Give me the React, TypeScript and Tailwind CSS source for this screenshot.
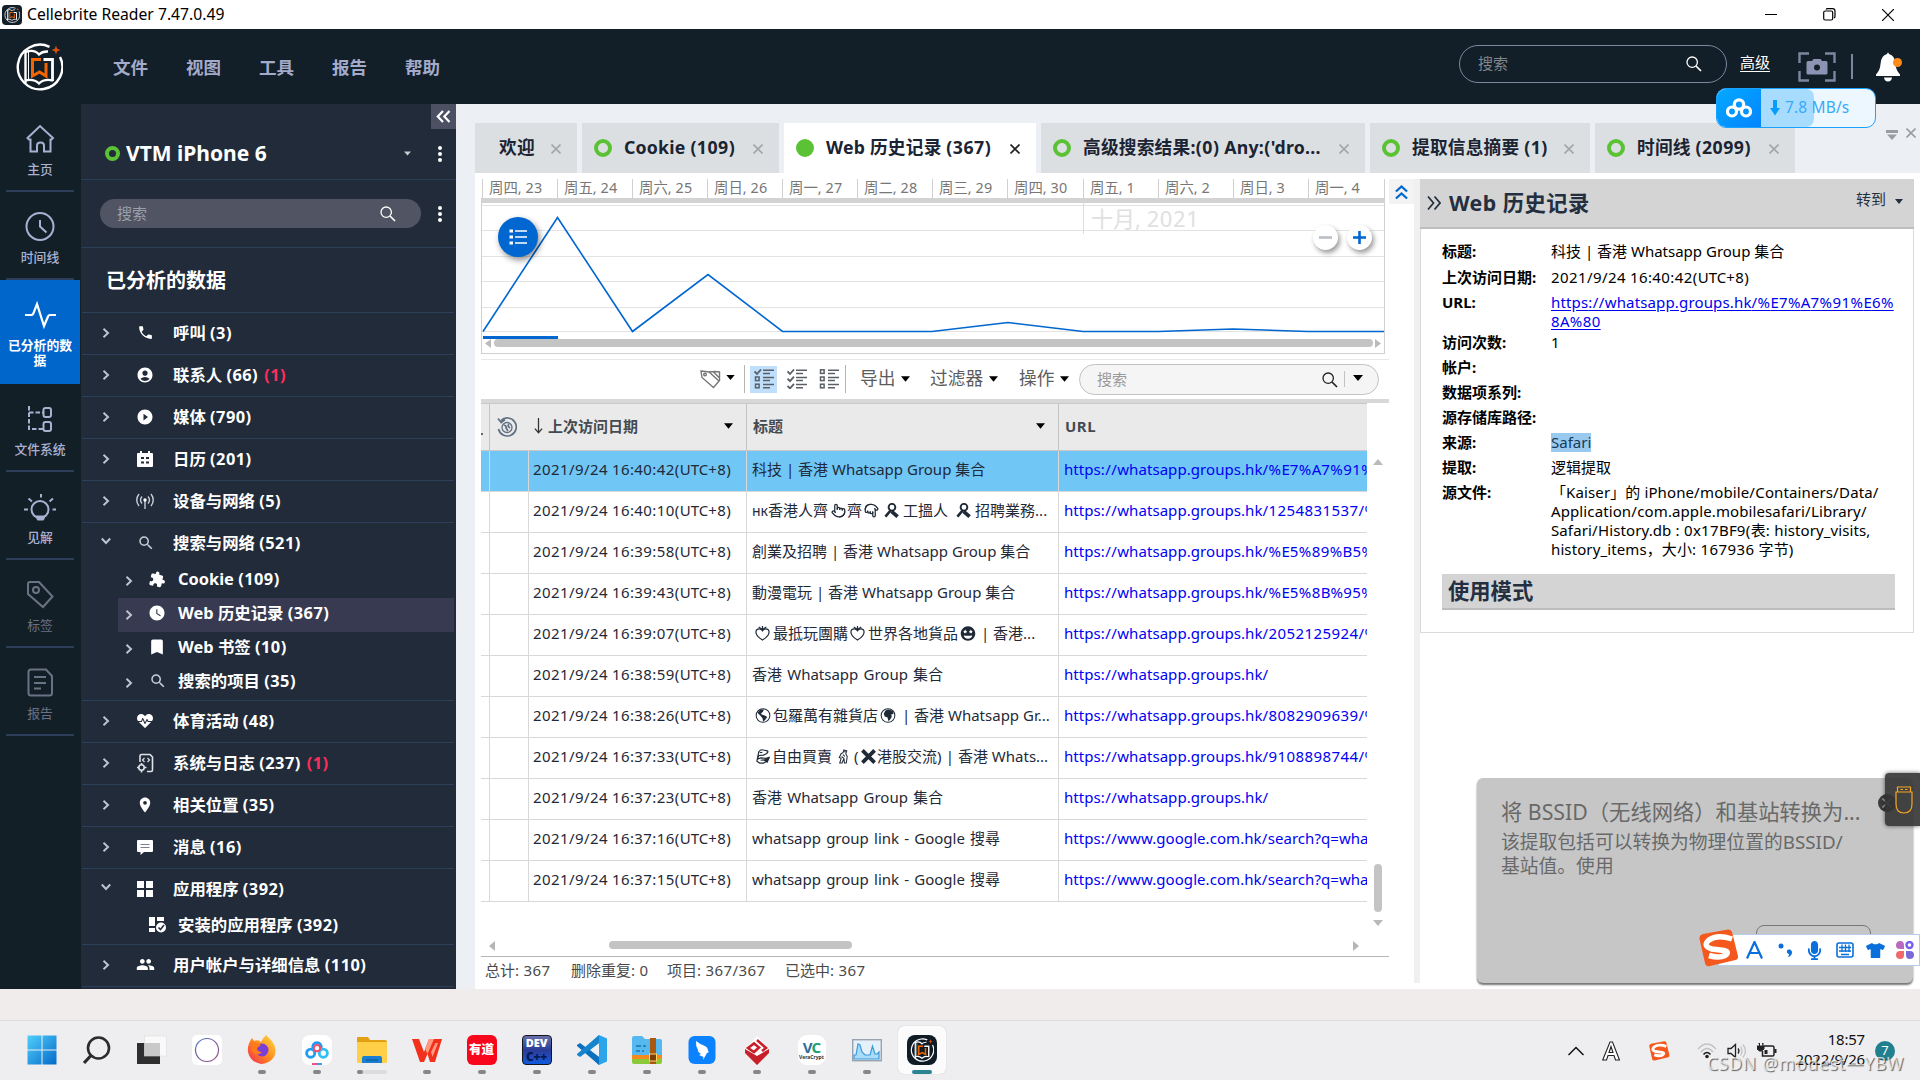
import type { ReactNode } from "react"
import clsx from "clsx"
import { Pointer } from "lucide-react"
import {
  MdPhone,
  MdAccountCircle,
  MdPlayCircleFilled,
  MdSearch,
  MdExtension,
  MdWatchLater,
  MdBookmark,
  MdLocationOn,
  MdPeople,
} from "react-icons/md"
import { FaHeartbeat, FaGrinStars, FaTshirt, FaMicrophone } from "react-icons/fa"

/* ---------- shared bits ---------- */

// Digits and symbols are set a touch wider than the letters around them
function T({ children }: { children: string }) {
  return (
    <>
      {children.split(/([0-9:%()+/]+)/).map((part, i) =>
        i % 2 ? (
          <span key={i} className="tracking-[0.028em] whitespace-pre">
            {part}
          </span>
        ) : (
          <span key={i} className="whitespace-pre">
            {part}
          </span>
        )
      )}
    </>
  )
}

function Caret({ className = "h-[6px] w-[10px]" }: { className?: string }) {
  return (
    <svg viewBox="0 0 10 6" className={clsx("shrink-0", className)}>
      <path d="M0 0H10L5 6Z" fill="currentColor" />
    </svg>
  )
}

function Cross({ className }: { className?: string }) {
  return (
    <svg viewBox="0 0 10 10" className={clsx("h-[10px] w-[10px] shrink-0", className)}>
      <path d="M.5 .5L9.5 9.5M9.5 .5L.5 9.5" stroke="currentColor" strokeWidth="1.6" fill="none" />
    </svg>
  )
}

function Lens({ className }: { className?: string }) {
  return (
    <svg viewBox="0 0 16 16" className={clsx("h-4 w-4 shrink-0", className)} fill="none" stroke="currentColor">
      <circle cx="6.2" cy="6.2" r="5.2" strokeWidth="1.3" />
      <path d="M10 10L15 15" strokeWidth="1.7" />
    </svg>
  )
}

function Ring({ className }: { className?: string }) {
  return <span className={clsx("block shrink-0 rounded-full border-[#5bc236]", className)} />
}

function Dots() {
  return (
    <div className="flex w-1 flex-col gap-[2px]">
      <i className="h-1 w-1 rounded-full bg-white" />
      <i className="h-1 w-1 rounded-full bg-white" />
      <i className="h-1 w-1 rounded-full bg-white" />
    </div>
  )
}

function Logo({ className }: { className?: string }) {
  return (
    <svg viewBox="0 0 48 48" className={className} fill="none">
      <path d="M34.5 3.8A22.3 22.3 0 1 0 45 14" stroke="#fff" strokeWidth="2.4" />
      <path d="M10.5 40V9C16 7 21 8 24 11.5C26.5 9 29 8.3 33 8.5" stroke="#fff" strokeWidth="2.4" />
      <path d="M13.5 9V38" stroke="#fff" strokeWidth="1" />
      <path d="M28.500 16.500H37.500V38" stroke="#fff" strokeWidth="2.8" />
      <path d="M10 37.500C16 36 21 37.500 24 40.500C27 37.500 32 36 38 37.500" stroke="#fff" strokeWidth="2.4" />
      <path d="M26 16.500H17.500V33L24.500 29L31 33V20" stroke="#f26500" strokeWidth="3" />
      <path d="M41 2.500L42.200 5.800L45.500 7L42.200 8.200L41 11.500L39.800 8.200L36.500 7L39.800 5.800Z" fill="#d9500c" />
    </svg>
  )
}

/* ---------- title bar and header ---------- */

function TitleBar() {
  return (
    <div className="flex h-[29px] shrink-0 items-center bg-white text-black">
      <div className="ml-[2px] flex h-5 w-5 items-center justify-center rounded bg-[#13202a]">
        <Logo className="h-4 w-4" />
      </div>
      <span className="ml-[5px] text-[15.7px]">Cellebrite Reader 7.47.0.49</span>
      <svg viewBox="0 0 12 12" className="ml-auto h-3 w-3" stroke="#000">
        <path d="M0 5.500H12" />
      </svg>
      <svg viewBox="0 0 13 13" className="ml-[46px] h-[13px] w-[13px]" fill="none" stroke="#000" strokeWidth="1.2">
        <rect x=".7" y="3" width="9" height="9" rx="1.5" />
        <path d="M3 1.500Q3.500 .7 4.500 .7H9.500Q12 .7 12 3V8.500Q12 9.500 11 10" />
      </svg>
      <svg viewBox="0 0 12 12" className="mr-[26px] ml-[46px] h-3 w-3" stroke="#000" strokeWidth="1.2">
        <path d="M0 0L12 12M12 0L0 12" />
      </svg>
    </div>
  )
}

function Header() {
  const menus = ["文件", "视图", "工具", "报告", "帮助"]
  return (
    <header className="flex h-[75px] shrink-0 items-center bg-[#131f28]">
      <Logo className="mt-px ml-[15px] h-12 w-12" />
      <nav className="mt-[2px] ml-[50px] flex gap-[38px] text-[17.5px] leading-none font-bold text-[#a3aaca]">
        {menus.map((m) => (
          <span key={m} className="w-[35px] whitespace-nowrap">
            {m}
          </span>
        ))}
      </nav>
      <div className="mt-[-5px] ml-auto flex h-[38px] w-[268px] items-center justify-between rounded-full border border-[#7c87a0] pr-6 pb-px pl-[18px] text-[15px] text-[#80868c]">
        搜索
        <Lens className="text-white" />
      </div>
      <span className="mt-[-7px] ml-[13px] border-b border-white text-[15px] leading-[17px] text-white">高级</span>
      <svg viewBox="0 0 38 30" className="mt-px ml-7 h-[30px] w-[38px]" fill="none">
        <path d="M1.500 11V1.500H11M27 1.500H36.500V11M36.500 19V28.500H27M11 28.500H1.500V19" stroke="#7d86a0" strokeWidth="2.4" />
        <path d="M10 9H14L15.500 7H22.500L24 9H28Q29.500 9 29.500 10.500V21Q29.500 22.500 28 22.500H10Q8.500 22.500 8.500 21V10.500Q8.500 9 10 9Z" fill="#8d93b3" />
        <circle cx="19" cy="15.500" r="3" fill="#131f28" />
      </svg>
      <i className="ml-[15px] h-[25px] w-[2px] bg-[#7d86a0]" />
      <svg viewBox="0 0 26 30" className="mr-[18px] ml-[23px] h-[30px] w-[26px]">
        <path d="M11 2Q12 -1 13 2Q19 3.500 19.500 12Q19.800 18 24 22.500V24H0V22.500Q4.200 18 4.500 12Q5 3.500 11 2ZM8 25.500H16Q15.500 29.500 12 29.500Q8.500 29.500 8 25.500Z" fill="#fff" />
        <circle cx="21.5" cy="10.5" r="4.5" fill="#ff8c1a" />
      </svg>
    </header>
  )
}

/* ---------- left rail ---------- */

function RailItem({ label, dim, active, children }: { label: string; dim?: boolean; active?: boolean; children: ReactNode }) {
  return (
    <div
      className={clsx(
        "flex w-20 shrink-0 flex-col items-center text-[12.8px] leading-[15px]",
        active ? "h-[104px] bg-[#0066cc] pt-5 font-bold text-white" : "h-[88px] pt-5",
        !active && (dim ? "text-[#6c7285]" : "text-[#a9b1d2]")
      )}
    >
      <svg viewBox="0 0 32 30" className="h-[30px] w-8 shrink-0" fill="none" stroke="currentColor" strokeWidth="2">
        {children}
      </svg>
      <span className={clsx("px-2 text-center", active ? "mt-2 w-20" : "mt-2 whitespace-nowrap", !dim && !active && "font-medium")}>
        {label}
      </span>
      {!active && <i className="mt-auto h-[2px] w-[68px] bg-[#2d3d5a]" />}
    </div>
  )
}

function Rail() {
  return (
    <aside className="flex w-[81px] shrink-0 flex-col bg-[#131f27]">
      <RailItem label="主页">
        <path d="M3.500 14L16 2L29 14L27.500 15.500H26.500V27.500H20V21.500Q20 18.500 16.500 18.500Q13 18.500 13 21.500V27.500H6.500V15.500H5Z" />
      </RailItem>
      <RailItem label="时间线">
        <circle cx="16" cy="14.500" r="13.500" />
        <path d="M16 8V14.500L22.500 20.500" />
      </RailItem>
      <RailItem label="已分析的数据" active>
        <path d="M1 15H7Q9 15 9.500 13L13 4L20 26L24 16.500Q24.500 15 26 15H32" strokeWidth="2.2" />
      </RailItem>
      <RailItem label="文件系统">
        <path d="M5 2V25H20M5 8.500H19" strokeDasharray="4.500 2" />
        <rect x="19.500" y="4" width="7.500" height="9" rx="2" />
        <rect x="19.500" y="18" width="7.500" height="9" rx="2" />
      </RailItem>
      <RailItem label="见解">
        <circle cx="16" cy="17.500" r="8.500" />
        <path d="M12 24H21L19.500 28H13.500Z" fill="currentColor" strokeWidth="1" />
        <path d="M17 2V5.500M4.500 6.500L8 9.500M29 6.500L25.500 9.500M0 17.500H4M28.500 17.500H32" />
      </RailItem>
      <RailItem label="标签" dim>
        <path d="M4 4Q4 2 6 2L15 2L28.500 16.500L19 27L4 14Z" />
        <circle cx="12" cy="10" r="3" />
      </RailItem>
      <RailItem label="报告" dim>
        <path d="M7 1.500H22L28 8V25Q28 27.500 25.500 27.500H7Q4.500 27.500 4.500 25V4Q4.500 1.500 7 1.500Z" />
        <path d="M10 9H22M10 15H22M10 20.500H17" />
      </RailItem>
    </aside>
  )
}

/* ---------- device tree ---------- */

function CalendarIcon() {
  return (
    <svg viewBox="0 0 16 16" className="h-4 w-4" fill="currentColor">
      <path fillRule="evenodd" d="M1 2H3V0H5V2H11V0H13V2H15Q16 2 16 3V15Q16 16 15 16H1Q0 16 0 15V3Q0 2 1 2ZM4 6V8H7V6ZM9 6V8H12V6ZM4 10.500V12.500H7V10.500ZM9 10.500V12.500H12V10.500Z" />
    </svg>
  )
}

function AntennaIcon() {
  return (
    <svg viewBox="0 0 18 16" className="h-4 w-[18px]" fill="none" stroke="#c6ccd4" strokeWidth="1.4">
      <path d="M3 1Q-1.500 7 3 13M6 3.500Q3 7 6 10.500M15 1Q19.500 7 15 13M12 3.500Q15 7 12 10.500M9 7V16" />
      <circle cx="9" cy="7" r="1.7" fill="#fff" stroke="none" />
    </svg>
  )
}

function LogIcon() {
  return (
    <svg viewBox="0 0 18 20" className="h-5 w-[18px]" fill="none" stroke="#dfe3e8" strokeWidth="1.6">
      <path d="M4 9V3Q4 1.500 5.500 1.500H14L16.500 4V17Q16.500 18.500 15 18.500H11" />
      <path d="M8.500 5L6.500 7L8.500 9M11.500 5L13.500 7L11.500 9" strokeWidth="1.2" />
      <circle cx="5.500" cy="14.500" r="2.7" />
      <path d="M5.500 10V12M5.500 17V19.500M1 14.500H3M8 14.500H10.500" />
    </svg>
  )
}

function MessageIcon() {
  return (
    <svg viewBox="0 0 16 15" className="mt-[2px] h-[15px] w-4" fill="currentColor">
      <path d="M1 0H15Q16 0 16 1V11Q16 12 15 12H7L3.500 15V12H1Q0 12 0 11V1Q0 0 1 0Z" />
      <path d="M3.500 4.500H12.500M3.500 7.500H12.500" stroke="#7b828d" strokeWidth="1.200" />
    </svg>
  )
}

function GridIcon() {
  return (
    <svg viewBox="0 0 16 16" className="h-4 w-4" fill="currentColor">
      <path d="M0 0H7V7H0ZM9 0H16V7H9ZM0 9H7V16H0ZM9 9H16V16H9Z" />
    </svg>
  )
}

function InstalledIcon() {
  return (
    <svg viewBox="0 0 17 16" className="h-4 w-[17px]" fill="currentColor">
      <path d="M0 0H6V9H0ZM8 0H15V4H8ZM0 11H6V15H0Z" />
      <circle cx="12" cy="10.500" r="5" />
      <path d="M9.500 10.500L11.500 12.500L15 8" stroke="#212b3a" strokeWidth="1.500" fill="none" />
    </svg>
  )
}

type Child = { label: string; icon: ReactNode; selected?: boolean; leaf?: boolean }
type Node = { label: string; icon: ReactNode; alert?: string; children?: Child[] }

const tree: Node[] = [
  { label: "呼叫 (3)", icon: <MdPhone size={17} /> },
  { label: "联系人 (66)", alert: "(1)", icon: <MdAccountCircle size={18} /> },
  { label: "媒体 (790)", icon: <MdPlayCircleFilled size={18} /> },
  { label: "日历 (201)", icon: <CalendarIcon /> },
  { label: "设备与网络 (5)", icon: <AntennaIcon /> },
  {
    label: "搜索与网络 (521)",
    icon: <MdSearch size={18} className="ml-[2px] text-[#c8ced6]" />,
    children: [
      { label: "Cookie (109)", icon: <MdExtension size={17} className="rotate-12" /> },
      { label: "Web 历史记录 (367)", icon: <MdWatchLater size={18} />, selected: true },
      { label: "Web 书签 (10)", icon: <MdBookmark size={20} /> },
      { label: "搜索的项目 (35)", icon: <MdSearch size={18} className="ml-[2px] text-[#c8ced6]" /> },
    ],
  },
  { label: "体育活动 (48)", icon: <FaHeartbeat size={16} /> },
  { label: "系统与日志 (237)", alert: "(1)", icon: <LogIcon /> },
  { label: "相关位置 (35)", icon: <MdLocationOn size={18} /> },
  { label: "消息 (16)", icon: <MessageIcon /> },
  {
    label: "应用程序 (392)",
    icon: <GridIcon />,
    children: [{ label: "安装的应用程序 (392)", icon: <InstalledIcon />, leaf: true }],
  },
  { label: "用户帐户与详细信息 (110)", icon: <MdPeople size={19} /> },
]

function Chevron({ open }: { open?: boolean }) {
  return (
    <svg viewBox="0 0 10 10" className={clsx("h-[10px] w-[10px]", open && "-translate-y-[2px] rotate-90")} fill="none">
      <path d="M2.500 .8L7 5L2.500 9.200" stroke="#b9c4cc" strokeWidth="2" />
    </svg>
  )
}

function TreePanel() {
  return (
    <aside className="flex w-[375px] shrink-0 flex-col overflow-hidden bg-[#212b3a] text-white">
      <div className="flex h-[76px] border-b border-[#2d3e5a]">
        <div className="flex flex-1 items-center pt-[24px] pl-6">
          <Ring className="h-[15px] w-[15px] border-4" />
          <span className="mt-[-2px] ml-[6px] text-[21px] leading-[24px] font-bold">VTM iPhone 6</span>
          <Caret className="mr-[20px] ml-auto h-[5px] w-[7px] text-[#c8ccd2]" />
        </div>
        <div className="flex w-[25px] flex-col items-center">
          <button className="flex h-[25px] w-[25px] items-center justify-center bg-[#4b5163]">
            <svg viewBox="0 0 15 13" className="h-[13px] w-[15px]" fill="none" stroke="#fff" strokeWidth="2.2">
              <path d="M7 1L1.800 6.500L7 12M13.500 1L8.300 6.500L13.500 12" />
            </svg>
          </button>
          <div className="mt-[17px] mr-[7px]">
            <Dots />
          </div>
        </div>
      </div>
      <div className="flex h-[68px] items-center border-b border-[#2d3e5a] pl-[19px]">
        <div className="flex h-[29px] w-[321px] items-center justify-between rounded-full bg-[#505463] pr-[25px] pl-[17px] text-[15px] text-[#9a9fa8]">
          搜索
          <Lens className="text-white" />
        </div>
        <div className="ml-[17px]">
          <Dots />
        </div>
      </div>
      <div className="mr-[2px] ml-px flex h-[65px] items-center border-b border-[#2d3e5a] pt-px pl-6 text-[20px] font-bold">
        已分析的数据
      </div>
      {tree.map((n) => (
        <div key={n.label} className="mr-[2px] ml-px shrink-0 border-b border-[#2d3e5a] text-[16.4px] leading-5 font-bold">
          <div className="flex h-[41px] items-center pb-[2px]">
            <span className="ml-[19px] w-[10px]">
              <Chevron open={!!n.children} />
            </span>
            <span className="ml-[24px] flex w-5 justify-center">{n.icon}</span>
            <span className="ml-[18px] whitespace-nowrap">
              <T>{n.label}</T>
              {n.alert && (
                <span className="ml-[6px] text-[#ff2d5c]">
                  <T>{n.alert}</T>
                </span>
              )}
            </span>
          </div>
          {n.children?.map((c) => (
            <div key={c.label} className={clsx("ml-9 flex h-[34px] items-center", c.selected && "bg-[#373a50]")}>
              <span className="ml-[6px] w-[10px]">{!c.leaf && <Chevron />}</span>
              <span className="ml-[13px] flex w-5 -translate-y-[2px] justify-center">{c.icon}</span>
              <span className="ml-[11px] -translate-y-[2px] whitespace-nowrap">
                <T>{c.label}</T>
              </span>
            </div>
          ))}
        </div>
      ))}
    </aside>
  )
}

/* ---------- tabs ---------- */

const tabs = [
  { label: "欢迎", width: "w-[102px]" },
  { label: "Cookie (109)", width: "w-[197px]", ring: true },
  { label: "Web 历史记录 (367)", width: "w-[252px]", ring: true, active: true },
  { label: "高级搜索结果:(0) Any:('dro...", width: "w-[324px]", ring: true },
  { label: "提取信息摘要 (1)", width: "w-[220px]", ring: true },
  { label: "时间线 (2099)", width: "w-[200px]", ring: true },
]

function Tabs() {
  return (
    <div className="flex h-[69px] shrink-0 items-end gap-[5px] bg-[#ecf0f5] pl-[19px]">
      {tabs.map((t) => (
        <div
          key={t.label}
          className={clsx(
            "flex h-[50px] items-center text-[17.7px] leading-none font-bold tracking-[0.012em] text-[#1a2433]",
            t.width,
            t.active ? "bg-white" : "bg-[#dcdfe2]",
            t.ring ? "pl-3" : "pl-6"
          )}
        >
          {t.ring && <Ring className={clsx("mr-3 h-[18px] w-[18px]", t.active ? "border-9" : "border-4")} />}
          <span className="whitespace-nowrap">
            <T>{t.label}</T>
          </span>
          <Cross className={clsx("mt-[2px] mr-4 ml-auto", t.active ? "text-[#222]" : "text-[#a3a6a9]")} />
        </div>
      ))}
      <div className="mb-[33px] ml-auto flex items-center gap-2 pr-1 text-[#9a9da0]">
        <svg viewBox="0 0 12 10" className="mt-1 h-[10px] w-3" fill="currentColor">
          <path d="M0 0H12V3H0ZM1 4.500H11L6 10Z" />
        </svg>
        <Cross />
      </div>
    </div>
  )
}

/* ---------- timeline chart ---------- */

const days = ["周四, 23", "周五, 24", "周六, 25", "周日, 26", "周一, 27", "周二, 28", "周三, 29", "周四, 30", "周五, 1", "周六, 2", "周日, 3", "周一, 4"]

function ZoomButton({ plus }: { plus?: boolean }) {
  return (
    <button className="flex h-[25px] w-[25px] items-center justify-center rounded-full bg-white shadow-[2px_3px_5px_rgba(0,0,0,0.4)]">
      <svg viewBox="0 0 13 13" className={clsx("h-[13px] w-[13px]", plus ? "text-[#0066d0]" : "text-[#b9bfc6]")} stroke="currentColor" strokeWidth="2.6">
        <path d={plus ? "M0 6.500H13M6.500 0V13" : "M0 6.500H13"} />
      </svg>
    </button>
  )
}

function Timeline() {
  return (
    <div className="flex h-[175px] w-[904px] flex-col">
      <div className="flex h-[19px] border-r border-[#d0d0d0] pl-px">
        {days.map((d, i) => (
          <span
            key={d}
            className={clsx("border-l border-[#d0d0d0] pl-[6px] text-[14.4px] leading-[17px] text-[#777]", i === 7 ? "w-[76px]" : "w-[75px]")}
          >
            <T>{d}</T>
          </span>
        ))}
      </div>
      <div className="h-[5px] bg-[#d3d3d3]" />
      <div className="relative h-[151px] border-x border-b border-[#d0d0d0]">
        <svg viewBox="0 0 902 136" className="h-[136px] w-[902px]" fill="none">
          <path d="M0 2.500H902M0 27.500H902M0 53.500H902M0 78.500H902M0 104.500H902M0 128.500H902" stroke="#e3e3e3" />
          <path d="M601.500 0V31" stroke="#ddd" />
          <path d="M1 128.500L75.500 14.500L150.500 128.500L226 71.500L300.500 128.500H450L526 119.500L601 128.500H676L751 126L826 128.500H902" stroke="#0066d0" strokeWidth="1.600" />
        </svg>
        <div className="absolute top-0 left-[609px] text-[22px] leading-[30px] text-[#e0e0e0]">
          <T>十月, 2021</T>
        </div>
        <button className="absolute top-[14px] left-4 flex h-10 w-10 items-center justify-center rounded-full bg-[#0066d0] shadow-[2px_3px_6px_rgba(0,0,0,0.45)]">
          <svg viewBox="0 0 18 16" className="h-4 w-[18px]" stroke="#fff" strokeWidth="1.700">
            <path d="M6 2H18M6 8H18M6 14H18" />
            <path d="M.5 2H4M.5 8H4M.5 14H4" strokeWidth="3.200" />
          </svg>
        </button>
        <div className="absolute top-[22px] right-3 flex gap-[9px]">
          <ZoomButton />
          <ZoomButton plus />
        </div>
        <div className="absolute top-[133px] left-[1px] h-[3px] w-[75px] bg-[#0066d0]" />
        <div className="absolute top-[135px] left-[1px] flex h-[10px] w-[900px] items-center justify-between">
          <svg viewBox="0 0 6 9" className="ml-[2px] h-[9px] w-[6px]" fill="#bbb">
            <path d="M6 0V9L0 4.500Z" />
          </svg>
          <div className="h-2 w-[879px] rounded-full bg-[#c4c4c4]" />
          <svg viewBox="0 0 6 9" className="mr-[2px] h-[9px] w-[6px]" fill="#bbb">
            <path d="M0 0V9L6 4.500Z" />
          </svg>
        </div>
      </div>
    </div>
  )
}

/* ---------- toolbar ---------- */

function ListIcon({ checks }: { checks: boolean[] }) {
  return (
    <svg viewBox="0 0 20 20" className="h-5 w-5" fill="none" stroke="#5a6066" strokeWidth="1.500">
      {checks.map((on, i) => (
        <g key={i} transform={`translate(0 ${i * 7.2})`}>
          {on ? <path d="M.5 2.500L3 5L7 .5" strokeWidth="1.800" /> : <rect x="1.500" y=".8" width="3.600" height="3.600" />}
          <path d="M9 1.200H20M9 4.400H16" />
        </g>
      ))}
    </svg>
  )
}

function Toolbar() {
  return (
    <div className="mt-[5px] flex h-10 w-[908px] items-center border-t border-[#e8e8e8] pb-px text-black">
      <svg viewBox="0 0 22 20" className="ml-[219px] h-5 w-[22px]" fill="none" stroke="#777" strokeWidth="1.400">
        <path d="M1 2L9 3L19 12L13.500 18.500L2 8.500Z" />
        <path d="M9 3L15 2.500L19.500 3V12M13 2.500L19.500 9" />
        <circle cx="5" cy="5.500" r="1.300" />
      </svg>
      <Caret className="mt-[-4px] ml-1 h-[5px] w-[9px]" />
      <i className="ml-[9px] h-7 w-px bg-[#b5b5b5]" />
      <span className="ml-[5px] flex h-[27px] w-[27px] items-center justify-center bg-[#bfdffd]">
        <ListIcon checks={[true, false, false]} />
      </span>
      <span className="ml-[10px]">
        <ListIcon checks={[true, true, true]} />
      </span>
      <span className="ml-3">
        <ListIcon checks={[false, false, false]} />
      </span>
      <i className="ml-[6px] h-7 w-px bg-[#b5b5b5]" />
      <div className="ml-[14px] flex items-center text-[17.7px] leading-none whitespace-nowrap text-[#5c5c5c]">
        <span className="w-[35px]">导出</span>
        <Caret className="mr-[20px] ml-[6px] h-[6px] w-[9px] text-black" />
        <span className="w-[53px]">过滤器</span>
        <Caret className="mr-[21px] ml-[6px] h-[6px] w-[9px] text-black" />
        <span className="w-[35px]">操作</span>
        <Caret className="ml-[6px] h-[6px] w-[9px] text-black" />
      </div>
      <div className="mr-[10px] ml-auto flex h-[31px] w-[300px] items-center rounded-full border border-[#c2c2c2] bg-[#f5f5f5] pl-[17px] text-[15px] whitespace-nowrap text-[#9a9a9a]">
        搜索
        <Lens className="mt-px ml-auto text-[#222]" />
        <i className="ml-[6px] h-4 w-px bg-[#c2c2c2]" />
        <Caret className="mr-[15px] ml-[8px] h-[6px] w-[10px] -translate-y-px text-black" />
      </div>
    </div>
  )
}

/* ---------- table ---------- */

const glyph = "mx-[1px] inline-block h-[15px] align-[-2px]"

function HeartFruit() {
  return (
    <svg viewBox="0 0 16 16" className={clsx(glyph, "w-[15px]")} fill="none" stroke="currentColor" strokeWidth="1.3">
      <path d="M8 15Q1 11 1 6.500Q1 3 4.500 3Q7 3 8 5Q9 3 11.500 3Q15 3 15 6.500Q15 11 8 15Z" />
      <path d="M4 1L8 4L12 1M8 0V4" />
    </svg>
  )
}

function Magnifier() {
  return (
    <svg viewBox="0 0 16 16" className={clsx(glyph, "w-[15px]")} fill="none" stroke="currentColor">
      <circle cx="8.500" cy="4.500" r="3.600" strokeWidth="2" />
      <path d="M7 8L1.500 14.500" strokeWidth="2.800" />
      <path d="M8 9L14.500 14.500" strokeWidth="4" />
    </svg>
  )
}

function Globe({ africa }: { africa?: boolean }) {
  return (
    <svg viewBox="0 0 16 16" className={clsx(glyph, "w-[16px]")} fill="currentColor">
      <circle cx="8" cy="8" r="7.300" fill="none" stroke="currentColor" strokeWidth="1.100" />
      {africa ? (
        <path d="M5 3L8 1.500L13 3L14 6L11.500 7L12 9.500L10 12.500L8.500 14L7.500 10L4.500 9L3.500 6Z" />
      ) : (
        <path d="M2 5L5 1.500L9 1.500L8 4L6 5.500L6.500 7L10 8L12.500 9.500L10 13L8 14.500L7.500 11L5 8Z" />
      )}
    </svg>
  )
}

function Lady() {
  return (
    <svg viewBox="0 0 16 16" className={clsx(glyph, "w-[15px]")} fill="none" stroke="currentColor" strokeWidth="1.200">
      <path d="M4 3Q6 0 9 1L13 2Q15 3 12 5L9 6.500L4 7L2.500 11L6 9.500L12 10L14.500 9L13 13L9 15H5L2 13ZM5 4L8 3.500M6 12L11 11.500" />
      <path d="M10 12L15 9.500L13 14Z" fill="currentColor" />
    </svg>
  )
}

function Couple() {
  return (
    <svg viewBox="0 0 10 16" className={clsx(glyph, "w-[10px]")} fill="none" stroke="currentColor" strokeWidth="1.100">
      <path d="M6 1L9 2L8 5L9.500 8L8.500 15H6.500L6 10L4 15H1.500L3 10L1 9L3 5L5 4ZM5 6L7 8M3.500 8L6 10M6 3H8" />
    </svg>
  )
}

function Plain({ children }: { children: string }) {
  return (
    <span className="[word-spacing:1.3px]">
      <T>{children}</T>
    </span>
  )
}

const rows: { time: string; title: ReactNode; url: string }[] = [
  { time: "16:40:42", title: <T>科技 | 香港 Whatsapp Group 集合</T>, url: "https://whatsapp.groups.hk/%E7%A7%91%" },
  {
    time: "16:40:10",
    title: (
      <>
        <span className="text-[14px]">нк</span>香港人齊
        <Pointer className={clsx(glyph, "ml-[3px] w-[15px]")} />
        齊
        <Pointer className={clsx(glyph, "ml-[2px] w-[15px] rotate-180")} />
        <span className="mr-[3px] ml-[3px]">
          <Magnifier />
        </span>
        工搵人
        <span className="mr-[3px] ml-[7px]">
          <Magnifier />
        </span>
        招聘業務<T>...</T>
      </>
    ),
    url: "https://whatsapp.groups.hk/1254831537/%",
  },
  { time: "16:39:58", title: <T>創業及招聘 | 香港 Whatsapp Group 集合</T>, url: "https://whatsapp.groups.hk/%E5%89%B5%" },
  { time: "16:39:43", title: <T>動漫電玩 | 香港 Whatsapp Group 集合</T>, url: "https://whatsapp.groups.hk/%E5%8B%95%" },
  {
    time: "16:39:07",
    title: (
      <>
        <span className="mr-[2px] ml-[2px]">
          <HeartFruit />
        </span>
        最抵玩團購
        <span className="mr-[2px] ml-[1px]">
          <HeartFruit />
        </span>
        世界各地貨品
        <FaGrinStars className={clsx(glyph, "ml-[2px] w-[16px]")} />
        <T> | 香港...</T>
      </>
    ),
    url: "https://whatsapp.groups.hk/2052125924/%",
  },
  { time: "16:38:59", title: <Plain>香港 Whatsapp Group 集合</Plain>, url: "https://whatsapp.groups.hk/" },
  {
    time: "16:38:26",
    title: (
      <>
        <span className="mr-[1px] ml-[2px]">
          <Globe />
        </span>
        包羅萬有雜貨店
        <span className="mx-px">
          <Globe africa />
        </span>
        <T> | 香港 Whatsapp Gr...</T>
      </>
    ),
    url: "https://whatsapp.groups.hk/8082909639/%",
  },
  {
    time: "16:37:33",
    title: (
      <>
        <span className="mr-[1px] ml-[2px]">
          <Lady />
        </span>
        自由買賣
        <span className="mx-[5px]">
          <Couple />
        </span>
        <T>(</T>
        <svg viewBox="0 0 16 16" className={clsx(glyph, "ml-[2px] w-[15px]")} stroke="currentColor" strokeWidth="4">
          <path d="M1.500 1.500L14.500 14.500M14.500 1.500L1.500 14.500" />
        </svg>
        <T>港股交流) | 香港 Whats...</T>
      </>
    ),
    url: "https://whatsapp.groups.hk/9108898744/%",
  },
  { time: "16:37:23", title: <Plain>香港 Whatsapp Group 集合</Plain>, url: "https://whatsapp.groups.hk/" },
  { time: "16:37:16", title: <Plain>whatsapp group link - Google 搜尋</Plain>, url: "https://www.google.com.hk/search?q=wha" },
  { time: "16:37:15", title: <Plain>whatsapp group link - Google 搜尋</Plain>, url: "https://www.google.com.hk/search?q=wha" },
]

const cols = "grid w-[886px] grid-cols-[8px_39px_218px_312px_309px]"

function Table() {
  return (
    <div className="flex h-[538px] w-[908px]">
      <div className="w-[886px] overflow-hidden">
        <div className={clsx(cols, "h-12 border-y border-[#c8c8c8] bg-[#eaeaea] text-[15px] leading-[44px] font-bold text-[#454a50]")}>
          <span className="flex items-end pb-[15px]">
            <i className="h-[2px] w-[2px] bg-[#666]" />
          </span>
          <span className="flex items-center border-l border-[#c4c4c4] pl-[7px]">
            <svg viewBox="0 0 20 20" className="h-5 w-5" fill="none" stroke="#5f7080" strokeWidth="1.700">
              <path d="M4 3.500A9 9 0 1 1 1.500 12M1 1.500L4.200 5.500L8 2.500" />
              <circle cx="10" cy="10.500" r="5" strokeWidth="1.300" />
              <path d="M7 8Q10 9 9 11L11 14M12 7Q10 9 13 11" />
            </svg>
          </span>
          <span className="flex items-center pr-[13px] pb-[2px] pl-[6px]">
            <svg viewBox="0 0 10 18" className="mr-[5px] h-[18px] w-[9px]" fill="none" stroke="#333" strokeWidth="1.400">
              <path d="M5 0V16M1 12L5 16.500L9 12" />
            </svg>
            上次访问日期
            <Caret className="ml-auto h-[6px] w-[9px] text-black" />
          </span>
          <span className="flex items-center border-l border-[#c4c4c4] pr-[13px] pb-[2px] pl-[6px]">
            标题
            <Caret className="ml-auto h-[6px] w-[9px] text-black" />
          </span>
          <span className="border-l border-[#c4c4c4] pl-[6px] tracking-[0.5px]">URL</span>
        </div>
        {rows.map((r, i) => (
          <div
            key={r.time}
            className={clsx(
              cols,
              "h-[41px] border-b border-[#d8d8d8] text-[15px] leading-[37px] whitespace-nowrap text-[#1f2937]",
              i === 0 && "bg-[#70c6f5]"
            )}
          >
            <span />
            <span className="border-l border-[#d8d8d8]" />
            <span className="overflow-hidden border-l border-[#d8d8d8] pl-1">
              <T>{`2021/9/24 ${r.time}(UTC+8)`}</T>
            </span>
            <span className="overflow-hidden border-l border-[#d8d8d8] pl-[5px]">{r.title}</span>
            <span className="overflow-hidden border-l border-[#d8d8d8] pl-[5px] tracking-[0.06px] text-[#0000f5]">
              <T>{r.url}</T>
            </span>
          </div>
        ))}
      </div>
      <div className="ml-[6px] flex w-[10px] flex-col items-center text-[#b9b9b9]">
        <Caret className="mt-[56px] h-[6px] w-[10px] rotate-180" />
        <div className="mt-auto h-12 w-2 rounded-full bg-[#c4c4c4]" />
        <Caret className="mt-[8px] mb-[15px] h-[6px] w-[10px]" />
      </div>
    </div>
  )
}

function StatusBar() {
  return (
    <div className="w-[908px] text-[15px] text-[#4a4a4a]">
      <div className="flex h-[15px] items-start text-[#b5b5b5]">
        <svg viewBox="0 0 6 10" className="ml-2 h-[10px] w-[6px]" fill="currentColor">
          <path d="M6 0V10L0 5Z" />
        </svg>
        <div className="ml-[114px] h-2 w-[243px] rounded-full bg-[#c4c4c4]" />
        <svg viewBox="0 0 6 10" className="ml-[501px] h-[10px] w-[6px]" fill="currentColor">
          <path d="M0 0V10L6 5Z" />
        </svg>
      </div>
      <div className="flex h-[32px] border-t border-[#b5b5b5] pl-1 leading-[27px] whitespace-nowrap">
        <span className="w-[86px]">
          <T>总计: 367</T>
        </span>
        <span className="w-[96px]">
          <T>删除重复: 0</T>
        </span>
        <span className="w-[118px]">
          <T>项目: 367/367</T>
        </span>
        <span>
          <T>已选中: 367</T>
        </span>
      </div>
    </div>
  )
}

/* ---------- details ---------- */

const details: { label: string; value?: ReactNode; height: string }[] = [
  { label: "标题:", value: <T>科技 | 香港 Whatsapp Group 集合</T>, height: "h-[26px]" },
  { label: "上次访问日期:", value: <T>2021/9/24 16:40:42(UTC+8)</T>, height: "h-[25px]" },
  {
    label: "URL:",
    value: (
      <span className="tracking-[0.15px] text-[#0000f0] underline underline-offset-2">
        <T>https://whatsapp.groups.hk/%E7%A7%91%E6%</T>
        <br />
        <T>8A%80</T>
      </span>
    ),
    height: "h-[40px]",
  },
  { label: "访问次数:", value: <T>1</T>, height: "h-[25px]" },
  { label: "帐户:", height: "h-[25px]" },
  { label: "数据项系列:", height: "h-[25px]" },
  { label: "源存储库路径:", height: "h-[25px]" },
  {
    label: "来源:",
    value: (
      <span className="inline-block h-[19px] bg-[#99c9ef] text-[#123a5c]">
        <T>Safari</T>
      </span>
    ),
    height: "h-[25px]",
  },
  { label: "提取:", value: "逻辑提取", height: "h-[25px]" },
  {
    label: "源文件:",
    value: (
      <span className="tracking-[0.11px]">
        <T>「Kaiser」的 iPhone/mobile/Containers/Data/</T>
        <br />
        <T>Application/com.apple.mobilesafari/Library/</T>
        <br />
        <T>Safari/History.db : 0x17BF9(表: history_visits,</T>
        <br />
        <T>history_items，大小: 167936 字节)</T>
      </span>
    ),
    height: "h-[91px]",
  },
]

function Details() {
  return (
    <section className="flex h-[454px] w-[494px] flex-col border border-[#dadada]">
      <div className="-mx-px -mt-px flex h-[50px] items-center border-b-2 border-[#bdbdbd] bg-[#d4d4d4] pr-[11px] pl-[7px] text-[#232f40]">
        <svg viewBox="0 0 14 14" className="h-[14px] w-[14px]" fill="none" stroke="currentColor" strokeWidth="1.700">
          <path d="M1 .5L6.500 7L1 13.500M7.500 .5L13 7L7.500 13.500" />
        </svg>
        <span className="ml-2 text-[21.3px] font-bold tracking-[0.45px]">
          <T>Web 历史记录</T>
        </span>
        <span className="mt-[-7px] ml-auto text-[15px]">转到</span>
        <Caret className="mt-[-4px] ml-[9px] h-[5px] w-2" />
      </div>
      <div className="pt-[13px] pl-[21px] text-[15px] leading-[19px] text-black">
        {details.map((d) => (
          <div key={d.label} className={clsx("flex whitespace-nowrap", d.height)}>
            <span className="w-[109px] shrink-0 font-bold">
              <T>{d.label}</T>
            </span>
            <span>{d.value}</span>
          </div>
        ))}
      </div>
      <div className="mx-[21px] mr-[18px] flex h-9 items-center border-b-2 border-[#bdbdbd] bg-[#d4d4d4] pl-[6px] text-[21.3px] leading-none font-bold text-[#232f40]">
        使用模式
      </div>
    </section>
  )
}

/* ---------- floating widgets ---------- */

function CloudMark({ className, color = "#fff" }: { className?: string; color?: string }) {
  return (
    <svg viewBox="0 0 26 20" className={className} fill="none" stroke={color} strokeWidth="3.200">
      <circle cx="13" cy="6.500" r="4.700" />
      <circle cx="6" cy="13.500" r="4.500" />
      <circle cx="20" cy="13.500" r="4.500" />
    </svg>
  )
}

function SpeedWidget() {
  return (
    <div className="absolute top-[88px] left-[1716px] flex h-10 w-[160px] overflow-hidden rounded-[10px] border border-[#1ba2ff] bg-[#ecf7ff]">
      <div className="flex w-11 items-center justify-center bg-linear-to-br from-[#07a8ff] to-[#0784ff]">
        <CloudMark className="h-5 w-[26px]" />
      </div>
      <div className="w-[53px] rounded-r-lg bg-[#a8dcff]" />
      <div className="absolute top-0 left-[53px] flex h-full items-center gap-[5px] text-[15.400px] text-[#35aaf8]">
        <svg viewBox="0 0 10 16" className="h-4 w-[10px]" fill="#0a9bff">
          <path d="M3 0H7V8H10L5 15.500L0 8H3Z" />
        </svg>
        <span className="tracking-[0.2px] whitespace-nowrap">7.8 MB/s</span>
      </div>
    </div>
  )
}

function SogouMark({ className }: { className?: string }) {
  return (
    <svg viewBox="0 0 40 38" className={className}>
      <path d="M4 5L29 .5Q32 0 33 3L39 27Q39.500 30 36.500 31L11 37Q7 38 6 34L.5 10Q0 6 4 5Z" fill="#f4581c" />
      <path d="M33 10Q18 5 10 11Q3 17 13 20L25 21.500Q31 23 26 26.500Q20 29.500 10 26.500" fill="none" stroke="#fff" strokeWidth="5.500" />
    </svg>
  )
}

function Toast() {
  return (
    <div className="absolute top-[778px] left-[1477px] h-[205px] w-[436px] overflow-hidden rounded-md bg-[#c6c6c6] pt-[20px] pl-[24px] text-[#696969] shadow-[0_2px_2px_rgba(0,0,0,0.55)]">
      <div className="text-[21.300px] leading-[28px] whitespace-nowrap">
        <T>将 BSSID（无线网络）和基站转换为...</T>
      </div>
      <div className="mt-[4px] text-[18.800px] leading-[24px] whitespace-nowrap">
        <T>该提取包括可以转换为物理位置的BSSID/</T>
        <br />
        基站值。使用
      </div>
      <div className="mt-[47px] ml-[255px] h-[38px] w-[115px] rounded-lg border border-[#777]" />
    </div>
  )
}

function UsbWidget() {
  return (
    <>
      <div className="absolute top-[794px] left-[1878px] flex h-[18px] w-[18px] items-center justify-center rounded-full bg-[#3c3c3c] text-[#999]">
        <Cross />
      </div>
      <div className="absolute top-[773px] left-[1885px] flex h-[53px] w-[35px] items-center justify-center rounded-l bg-[#333]/90 pl-[2px] shadow-[0_0_4px_rgba(0,0,0,0.6)]">
        <svg viewBox="0 0 18 28" className="h-7 w-[18px]" fill="none" stroke="#f5a623" strokeWidth="1.200">
          <path d="M2.500 6V1H15.500V6M1 6H17V18Q17 27 9 27Q1 27 1 18ZM5.500 3.500H8M10 3.500H12.500" />
        </svg>
      </div>
    </>
  )
}

function ImeBar() {
  return (
    <div className="absolute top-[934px] left-[1718px] flex h-8 w-[202px] items-center border border-[#b3cdea] bg-white text-[#0a6fdb]">
      <SogouMark className="absolute -top-[6px] -left-[20px] h-[38px] w-10" />
      <svg viewBox="0 0 17 18" className="ml-[27px] h-[18px] w-[17px]" fill="none" stroke="currentColor" strokeWidth="2.200">
        <path d="M1 17.500L8.500 1L16 17.500M4 12H13" />
      </svg>
      <svg viewBox="0 0 15 16" className="ml-[15px] h-4 w-[15px]" fill="currentColor">
        <circle cx="3" cy="4" r="2.500" />
        <path d="M9 8.500Q10 7 12 7.500Q15 9 13.500 12.500Q12 15 9.500 15Q11.500 13.500 11 12Q8.500 11.500 9 8.500Z" />
      </svg>
      <FaMicrophone className="ml-[12px]" size={19} />
      <svg viewBox="0 0 18 16" className="ml-[12px] h-4 w-[18px]" fill="none" stroke="currentColor" strokeWidth="1.600">
        <rect x="1" y="1" width="16" height="14" rx="2" />
        <path d="M3 5.500H15M3 9H15M6 2.500V10M9.500 2.500V10M13 2.500V10M5 12.500H13" strokeWidth="1.300" />
      </svg>
      <FaTshirt className="ml-[12px]" size={19} />
      <svg viewBox="0 0 18 18" className="ml-[11px] h-[18px] w-[18px]">
        <path d="M4.500 0Q8 0 8 4.500V8H4Q0 8 0 4.500Q0 0 4.500 0Z" fill="#b86ac0" />
        <path d="M4.500 18Q8 18 8 14V10H4Q0 10 0 14Q0 18 4.500 18Z" fill="#f0696a" />
        <path d="M13.500 18Q10 18 10 14V10H14Q18 10 18 14Q18 18 13.500 18Z" fill="#7d68d8" />
        <circle cx="13.500" cy="4" r="3" fill="none" stroke="#7a5cf0" strokeWidth="2.400" />
      </svg>
    </div>
  )
}

/* ---------- taskbar ---------- */

const box = "h-[30px] w-[30px]"

const apps: { name: string; run?: boolean; art: ReactNode }[] = [
  {
    name: "start",
    art: (
      <svg viewBox="0 0 30 30" className={box}>
        <defs>
          <linearGradient id="win" x1="0" y1="0" x2="1" y2="1">
            <stop stopColor="#4fd0fb" />
            <stop offset="1" stopColor="#0669c9" />
          </linearGradient>
        </defs>
        <path d="M.5 .5H14.500V14.500H.5ZM15.500 .5H29.500V14.500H15.500ZM.5 15.500H14.500V29.500H.5ZM15.500 15.500H29.500V29.500H15.500Z" fill="url(#win)" />
      </svg>
    ),
  },
  {
    name: "search",
    art: (
      <svg viewBox="0 0 30 30" className={box} fill="none" stroke="#2b2b2b" strokeWidth="2.600">
        <circle cx="16.500" cy="13" r="10.500" />
        <path d="M9 20.500L2 28" strokeWidth="3.200" />
      </svg>
    ),
  },
  {
    name: "taskview",
    art: (
      <svg viewBox="0 0 30 30" className={box}>
        <rect x="0" y="8" width="23" height="21" fill="#2e2e2e" />
        <rect x="7.500" y="1" width="22" height="20" fill="#fafafa" fillOpacity=".85" stroke="#dcdcdc" strokeWidth=".6" />
        <rect x="7.500" y="8" width="15.500" height="13" fill="#c9c9c9" />
      </svg>
    ),
  },
  {
    name: "ring",
    art: (
      <svg viewBox="0 0 30 30" className={box}>
        <defs>
          <linearGradient id="halo" x1="0" y1="0" x2="1" y2="1">
            <stop stopColor="#4a74b8" />
            <stop offset="1" stopColor="#a04f86" />
          </linearGradient>
        </defs>
        <rect width="30" height="30" rx="5" fill="#fff" />
        <circle cx="15" cy="15" r="11.500" fill="none" stroke="url(#halo)" strokeWidth="1.200" />
      </svg>
    ),
  },
  {
    name: "firefox",
    run: true,
    art: (
      <svg viewBox="0 0 30 30" className={box}>
        <defs>
          <linearGradient id="fox" x1="1" y1="0" x2="0" y2="1">
            <stop stopColor="#ffe14a" />
            <stop offset=".5" stopColor="#ff8a1c" />
            <stop offset="1" stopColor="#f0285a" />
          </linearGradient>
        </defs>
        <path d="M19 0Q22 3 25 6Q31 14 27 22Q22 29 14 29Q3 27 1 17Q0 10 5 3L7 6Q12 4 14 7Q16 3 19 0Z" fill="url(#fox)" />
        <circle cx="15" cy="15" r="6.500" fill="#7a3fd6" />
        <path d="M4 8Q10 7 14 10L10 13Q10 17 15 17Q10 22 5 17Z" fill="#ff7a1a" />
      </svg>
    ),
  },
  {
    name: "netdisk",
    run: true,
    art: (
      <div className="flex h-[30px] w-[30px] flex-col items-center justify-end rounded-lg bg-white">
        <svg viewBox="0 0 26 20" className="mb-1 h-[18px] w-6" fill="none" strokeWidth="3.200">
          <circle cx="6" cy="13.500" r="4.500" stroke="#1f9df5" />
          <circle cx="20" cy="13.500" r="4.500" stroke="#2fc0f8" />
          <path d="M8.500 8A4.700 4.700 0 1 1 17.500 8" stroke="#2496f5" />
          <circle cx="13" cy="8" r="3.500" stroke="#f2516b" strokeWidth="2.200" />
        </svg>
        <div className="flex">
          <i className="h-[2px] w-[5px] bg-[#f0508a]" />
          <i className="h-[2px] w-[5px] bg-[#3d9bf5]" />
        </div>
      </div>
    ),
  },
  {
    name: "explorer",
    run: true,
    art: (
      <svg viewBox="0 0 30 30" className={box}>
        <path d="M0 3Q0 2 1 2H11L13 5H28Q30 5 30 7V12H0Z" fill="#e0a010" />
        <rect y="7" width="30" height="21" rx="1" fill="#ffcf48" />
        <path d="M5 28V23Q5 21 7 21H23Q25 21 25 23V28Z" fill="#1a7fd0" />
        <path d="M9 25H21" stroke="#0a5090" />
      </svg>
    ),
  },
  {
    name: "wps",
    run: true,
    art: (
      <svg viewBox="0 0 30 30" className={box}>
        <path d="M0 4H7L12 17L17 4H30L23 27H18L15.500 19L12 27H8Z" fill="#f2301c" />
        <path d="M17 4H22L15.500 19L13 14ZM23.500 8L26 8L20.500 22L19 17Z" fill="#ff9a80" />
      </svg>
    ),
  },
  {
    name: "youdao",
    run: true,
    art: <div className="flex h-[30px] w-[30px] items-center justify-center rounded-md bg-[#f8071c] text-[12.500px] leading-none font-black whitespace-nowrap text-white">有道</div>,
  },
  {
    name: "devcpp",
    run: true,
    art: (
      <div className="flex h-[30px] w-[30px] flex-col items-center justify-center overflow-hidden rounded-sm border border-[#15151f] bg-linear-to-b from-[#6a70a8] via-[#2a3c96] to-[#0a5ae0] text-[11px] leading-[14px] font-black text-white">
        <span>DEV</span>
        <span className="text-[12px] tracking-[-0.3px] text-[#071a55]">C++</span>
      </div>
    ),
  },
  {
    name: "vscode",
    run: true,
    art: (
      <svg viewBox="0 0 30 30" className={box}>
        <path d="M22 0L30 3.500V26.500L22 30L7 15Z" fill="#2ba4ea" />
        <path d="M22 8L13 15L22 22Z" fill="#efeff1" />
        <path d="M0 10L3 8L22 22V30L0 11Z" fill="#0a70bd" />
        <path d="M0 20L3 22L22 8V0L0 19Z" fill="#1584cf" />
      </svg>
    ),
  },
  {
    name: "zip",
    run: true,
    art: (
      <svg viewBox="0 0 30 30" className={box}>
        <path d="M0 3Q0 1 2 1H10L13 4H28Q30 4 30 6V20H0Z" fill="#55b8ee" />
        <path d="M0 20H30V24H0Z" fill="#f58a1c" />
        <path d="M0 24H30V27Q30 29 28 29H2Q0 29 0 27Z" fill="#8cc93a" />
        <path d="M4 11H9M11 11H14M4 16H8M10 16H12" stroke="#2b82c0" strokeWidth="2" />
        <rect x="18" y="3" width="6" height="26" fill="#a8590f" />
        <rect x="17.500" y="19" width="7" height="7" fill="#7a3e08" stroke="#ffd76a" />
      </svg>
    ),
  },
  {
    name: "bird",
    run: true,
    art: (
      <svg viewBox="0 0 30 30" className={box}>
        <rect x="1.500" y="1" width="27" height="28" rx="6" fill="#0b82ff" />
        <path d="M9 6Q14 10 18 11Q21 12.500 21 16L22 17L20 18L16 25L16.500 22L12 20L14 19Q10 16 11 15Q8.500 11 9 6Z" fill="#fff" />
      </svg>
    ),
  },
  {
    name: "ai",
    run: true,
    art: (
      <svg viewBox="0 0 30 30" className={box}>
        <path d="M15 1L27 14L15 28L3 14Z" fill="#fff" />
        <path d="M3 14L15 21V30L3 18ZM27 14L15 21V30L27 18Z" fill="#c8202a" />
        <path d="M6 13L12 8.500L17 12.500L12 17ZM15 5L24 13L20 16" fill="none" stroke="#c8202a" strokeWidth="2.600" />
      </svg>
    ),
  },
  {
    name: "veracrypt",
    run: true,
    art: (
      <div className="flex h-[30px] w-[28px] flex-col items-center justify-center rounded-[9px] bg-white text-[15px] leading-[14px] font-bold">
        <span className="flex tracking-[-1px]">
          <span className="text-[#2a6f9e]">V</span>
          <span className="text-[#22a06b]">C</span>
        </span>
        <span className="text-[5px] leading-[6px] text-[#333]">VeraCrypt</span>
      </div>
    ),
  },
  {
    name: "perfmon",
    run: true,
    art: (
      <svg viewBox="0 0 30 30" className={box}>
        <rect x=".7" y="4.700" width="28.600" height="21" fill="#e4f0fa" stroke="#9aa3ad" strokeWidth="1.400" />
        <path d="M2 24V20H4L6 9L8 10L10 17L13 20H18L20.500 11L23 19H25L27 17V24Z" fill="#a8dcf8" stroke="#3d9ad8" strokeWidth="1.200" />
      </svg>
    ),
  },
  {
    name: "reader",
    art: (
      <div className="flex h-[30px] w-[30px] items-center justify-center rounded-lg bg-[#0f1c26]">
        <Logo className="h-[24px] w-[24px]" />
      </div>
    ),
  },
]

function Taskbar() {
  return (
    <footer className="flex h-[60px] shrink-0 border-t border-[#dddcde] bg-[#eeeef0] pl-[14px]">
      {apps.map((a) => (
        <div key={a.name} className="flex w-[55px] justify-center pt-[5px]">
          <div
            className={clsx(
              "flex h-12 w-12 flex-col items-center rounded-md pt-[9px]",
              a.name === "reader" && "bg-[#fbfbfc] shadow-[0_0_1px_rgba(0,0,0,0.25)]"
            )}
          >
            {a.art}
            {a.name === "explorer" ? (
              <div className="mt-auto flex h-1 w-[30px] rounded-full bg-[#dcdcde]">
                <i className="h-1 w-[6px] rounded-full bg-[#868686]" />
              </div>
            ) : (
              a.run && <i className="mt-auto h-1 w-2 rounded-full bg-[#868686]" />
            )}
            {a.name === "reader" && <i className="mt-auto h-1 w-5 rounded-full bg-[#2a8492]" />}
          </div>
        </div>
      ))}
      <div className="ml-auto flex items-center text-[#111]">
        <svg viewBox="0 0 16 10" className="h-[10px] w-4" fill="none" stroke="currentColor" strokeWidth="1.500">
          <path d="M.5 9L8 1.500L15.500 9" />
        </svg>
        <svg viewBox="0 0 18 20" className="ml-[18px] h-5 w-[18px]" fill="#fff" stroke="#222" strokeWidth="1.100">
          <path fillRule="evenodd" d="M8 1H10.500L17.500 19H13.500L12 14.500H6L4.500 19H.7ZM7 11.500H11L9 5.500Z" />
        </svg>
        <SogouMark className="ml-[29px] h-5 w-[21px]" />
        <svg viewBox="0 0 20 16" className="ml-[27px] h-4 w-5" fill="none" stroke="#c3c3c5" strokeWidth="1.500">
          <path d="M1 6Q10 -4 19 6M4 9Q10 2 16 9" />
          <path d="M6.500 11.500Q10 7.500 13.500 11.500" stroke="#222" />
          <circle cx="10" cy="13.500" r="1.800" fill="#222" stroke="none" />
        </svg>
        <svg viewBox="0 0 20 16" className="ml-[10px] h-4 w-5" fill="none" stroke="#222" strokeWidth="1.300">
          <path d="M1 5.500H4L8.500 1.500V14.500L4 10.500H1Z" />
          <path d="M11 5.500Q13 8 11 10.500" />
          <path d="M13.500 3.500Q16.500 8 13.500 12.500M16 1.500Q21 8 16 14.500" stroke="#c3c3c5" />
        </svg>
        <svg viewBox="0 0 20 16" className="ml-[10px] h-4 w-5" fill="none" stroke="#222" strokeWidth="1.500">
          <path d="M7 3H15.500Q17 3 17 4.500V11.500Q17 13 15.500 13H5.500V8" />
          <path d="M18.500 6V10" strokeWidth="2" />
          <path d="M0 3H7V6L4.500 8H2.500L0 6ZM1.500 0H2.500V3M5 0H6V3" fill="#222" strokeWidth="1" />
          <path d="M9 7V11" strokeWidth="3" />
        </svg>
        <div className="mt-[-3px] w-[88px] text-right text-[15px] leading-5 tracking-[-0.2px]">
          18:57
          <br />
          2022/9/26
        </div>
        <span className="mr-[25px] ml-[10px] flex h-5 w-5 items-center justify-center rounded-full bg-[#20808f] text-[13px] text-white">7</span>
      </div>
    </footer>
  )
}

export default function App() {
  return (
    <div className="relative flex h-[1080px] w-[1920px] flex-col overflow-hidden bg-white [font-family:'Noto_Sans','Noto_Sans_CJK_SC',sans-serif]">
      <TitleBar />
      <Header />
      <div className="flex h-[885px] shrink-0">
        <Rail />
        <TreePanel />
        <main className="flex w-[1464px] flex-col bg-white">
          <Tabs />
          <div className="flex h-[816px]">
            <div className="w-[19px] bg-[#ecf0f5]" />
            <div className="ml-[6px] flex w-[908px] flex-col pt-[6px]">
              <Timeline />
              <Toolbar />
              <div className="h-1 shrink-0 bg-[#d8d8d8]" />
              <Table />
              <StatusBar />
            </div>
            <div className="mt-[6px] flex h-[25px] w-[25px] items-center justify-center bg-[#f3f3f3]">
              <svg viewBox="0 0 14 16" className="h-4 w-[13px]" fill="none" stroke="#0066d0" strokeWidth="2.400">
                <path d="M1 7.500L7 2L13 7.500M1 15L7 9.500L13 15" />
              </svg>
            </div>
            <div className="mt-[6px] h-[804px] w-[6px] bg-[#f0f0f0]" />
            <div className="mt-[6px]">
              <Details />
            </div>
          </div>
        </main>
      </div>
      <div className="h-[31px] shrink-0 bg-[#f0eceb]" />
      <Taskbar />

      <SpeedWidget />
      <Toast />
      <UsbWidget />
      <ImeBar />
      <div className="absolute top-[1051px] left-[1707px] text-[17.500px] leading-6 tracking-[0.8px] whitespace-nowrap text-white/70 [text-shadow:1px_1px_1px_rgba(0,0,0,0.6)]">
        CSDN @modest—YBW
      </div>
    </div>
  )
}
